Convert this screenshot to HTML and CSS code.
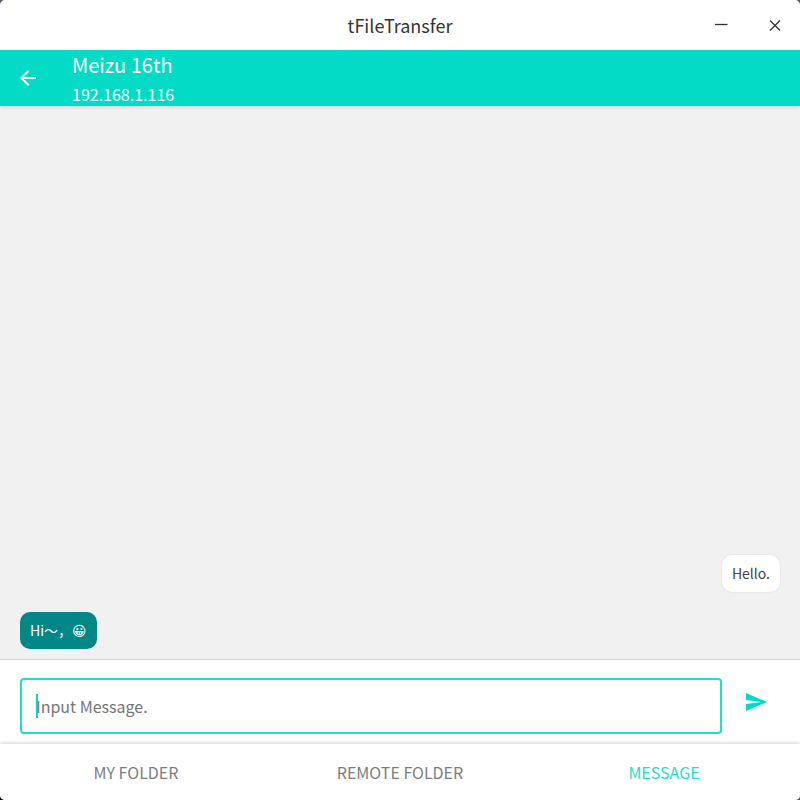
FILE: index.html
```html
<!DOCTYPE html>
<html lang="en">
<head>
<meta charset="utf-8">
<meta name="viewport" content="width=device-width, initial-scale=1">
<title>tFileTransfer</title>
<link rel="stylesheet" href="styles.css">
</head>
<body>
<div class="window">
  <header class="titlebar">
    <h1 class="titlebar-name">tFileTransfer</h1>
    <div class="window-controls">
      <button class="icon-button" type="button" aria-label="Minimize">
        <svg width="14" height="14" viewBox="0 0 14 14"><path d="M1 6.500H13.500" /></svg>
      </button>
      <button class="icon-button" type="button" aria-label="Close">
        <svg width="14" height="14" viewBox="0 0 14 14"><path d="M2 2.500L12 12.500M12 2.500L2 12.500" /></svg>
      </button>
    </div>
  </header>
  <div class="appbar">
    <button class="icon-button back" type="button" aria-label="Back">
      <svg width="24" height="24" viewBox="0 0 24 24"><path d="M20 11H7.830l5.590-5.590L12 4l-8 8 8 8 1.410-1.410L7.830 13H20z" /></svg>
    </button>
    <div class="device">
      <h2 class="device-name">Meizu 16th</h2>
      <p class="device-address">192.168.1.116</p>
    </div>
  </div>
  <main class="chat">
    <p class="bubble sent">Hello.</p>
    <p class="bubble received">Hi～，<span class="emoji">😀</span></p>
  </main>
  <form class="composer">
    <div class="field">
      <input class="message-input" type="text" placeholder="Input Message." aria-label="Message">
      <span class="caret"></span>
    </div>
    <button class="icon-button send" type="button" aria-label="Send">
      <svg width="24" height="24" viewBox="0 0 24 24"><path d="M2.010 21L23 12 2.010 3 2 10l15 2-15 2z" /></svg>
    </button>
  </form>
  <nav class="tabs">
    <button class="tab" type="button">MY FOLDER</button>
    <button class="tab" type="button">REMOTE FOLDER</button>
    <button class="tab active" type="button">MESSAGE</button>
  </nav>
</div>
</body>
</html>
```
FILE: styles.css
```css
* {
  box-sizing: border-box;
}

body {
  margin: 0;
  background: linear-gradient(90deg, #000 50%, #5b5755 50%) bottom / 100% 50% no-repeat, #555870;
  font-family: "Noto Sans CJK SC", "Noto Sans", sans-serif;
}

h1, h2, p {
  margin: 0;
  font-weight: 400;
}

button {
  margin: 0;
  padding: 0;
  border: 0;
  background: none;
  font-family: inherit;
}

svg {
  display: block;
}

.window {
  display: flex;
  flex-direction: column;
  min-height: 100vh;
  overflow: hidden;
  border-radius: 5px;
  background: #fff;
}

.titlebar {
  display: grid;
  grid-template-columns: 1fr auto 1fr;
  align-items: center;
  height: 50px;
  color: #333;
}

.titlebar-name {
  grid-column: 2;
  font-size: 18px;
  line-height: 26px;
}

.window-controls {
  display: flex;
  justify-content: flex-end;
  gap: 40px;
  padding-right: 18px;
}

.window-controls path {
  fill: none;
  stroke: #333;
  stroke-width: 1.300;
}

.icon-button {
  display: flex;
  align-items: center;
  justify-content: center;
}

.appbar {
  position: relative;
  z-index: 1;
  display: flex;
  align-items: center;
  gap: 32px;
  height: 56px;
  padding: 0 16px;
  background: #03dbc6;
  box-shadow: 0 1px 4px rgba(0, 0, 0, 0.12);
  color: #fff;
}

.back path {
  fill: #fff;
}

.device {
  padding-top: 2px;
}

.device-name {
  font-size: 20px;
  line-height: 30px;
}

.device-address {
  font-size: 16px;
  line-height: 28px;
}

.chat {
  display: flex;
  flex: 1;
  flex-direction: column;
  justify-content: flex-end;
  gap: 20px;
  padding: 10px 20px;
  border-bottom: 1px solid #d3d3d3;
  background: #f1f1f1;
}

.bubble {
  padding: 8px 10px;
  border-radius: 10px;
  font-size: 14px;
  line-height: 21px;
}

.sent {
  align-self: flex-end;
  background: #fff;
  box-shadow: 0 0 2px rgba(0, 0, 0, 0.12);
  color: #444;
}

.received {
  align-self: flex-start;
  background: #018786;
  color: #fff;
}

.emoji {
  font-family: "DejaVu Sans", sans-serif;
  line-height: 1;
}

.composer {
  display: flex;
  align-items: center;
  gap: 22px;
  height: 84px;
  padding: 8px 32px 0 20px;
}

.field {
  position: relative;
  flex: 1;
}

.message-input {
  display: block;
  width: 100%;
  height: 56px;
  padding: 0 14px;
  border: 2px solid #23decb;
  border-radius: 4px;
  outline: 0;
  background: #fff;
  color: #333;
  font-family: inherit;
  font-size: 16px;
}

.message-input::placeholder {
  color: #757575;
  opacity: 1;
}

.caret {
  position: absolute;
  top: 16px;
  left: 16px;
  width: 2px;
  height: 24px;
  background: #03dbc6;
}

.send {
  padding-bottom: 8px;
}

.send path {
  fill: #03dbc6;
}

.tabs {
  position: relative;
  display: grid;
  grid-template-columns: repeat(3, 1fr);
  height: 56px;
  padding: 0 4px;
  background: #fff;
  box-shadow: 0 0 5px rgba(0, 0, 0, 0.25);
}

.tab {
  color: #7d7d7d;
  font-size: 16px;
}

.active {
  color: #23decb;
}
```
